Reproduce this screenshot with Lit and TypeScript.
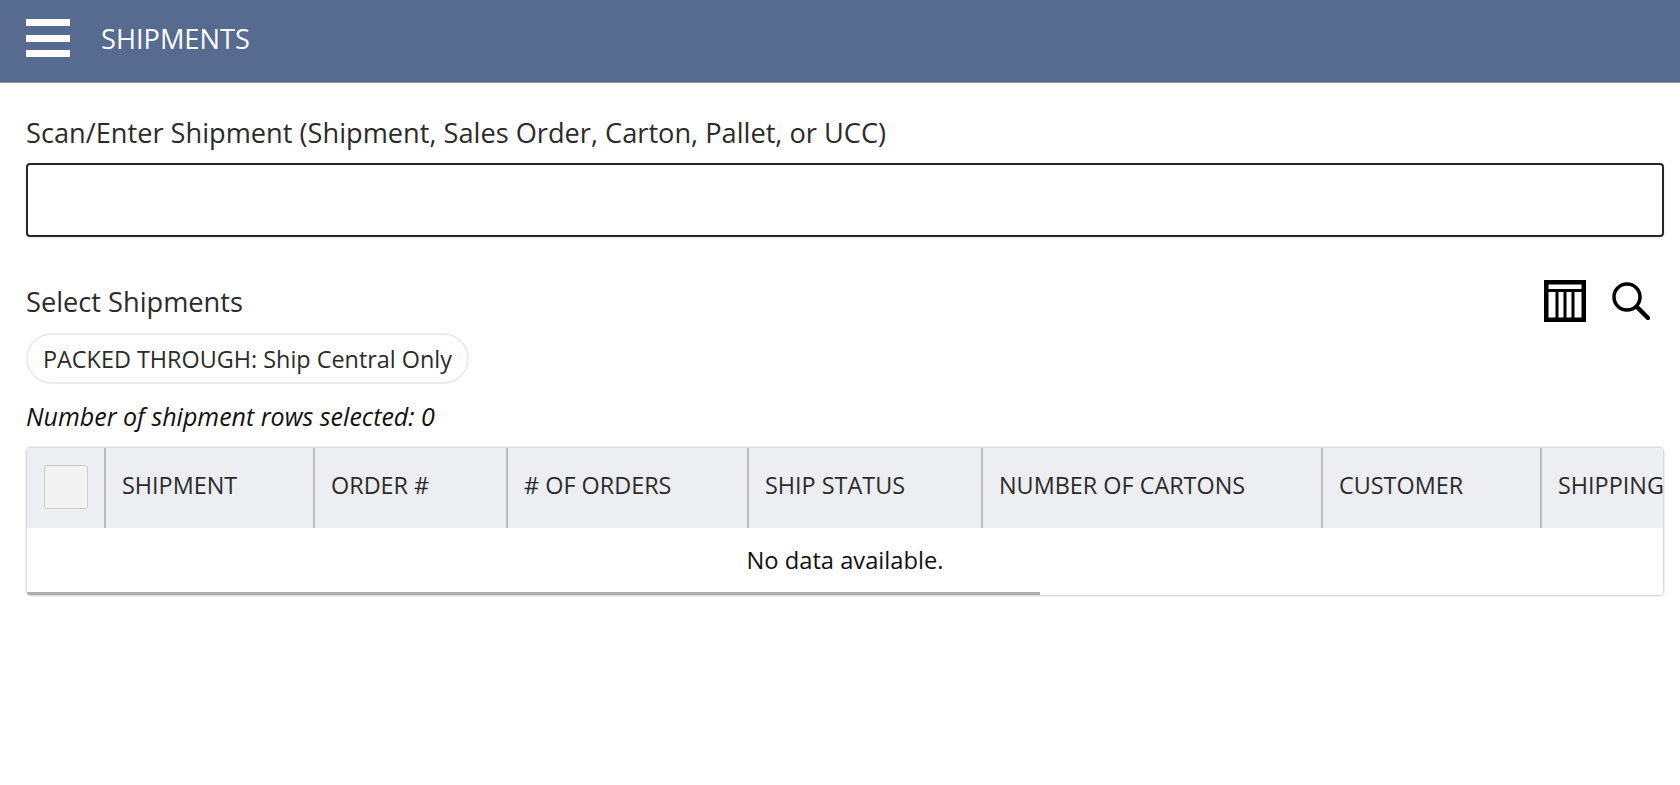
import { LitElement, html, css } from "lit";
import { customElement } from "lit/decorators.js";

const COLUMNS: [string, number][] = [
  ["SHIPMENT", 209],
  ["ORDER #", 193],
  ["# OF ORDERS", 241],
  ["SHIP STATUS", 234],
  ["NUMBER OF CARTONS", 340],
  ["CUSTOMER", 219],
  ["SHIPPING METHOD", 260],
];

@customElement("app-root")
export class AppRoot extends LitElement {
  static styles = css`
    :host { display: block; height: 785px; background: #fff; font-family: "Open Sans", sans-serif; color: #2b2b2b; overflow: hidden; }
    .header { box-sizing: border-box; height: 83px; background: #566b8f; border-bottom: 1px solid #8a97ad; display: flex; align-items: center; padding: 0 0 6px 26px; gap: 31px; }
    .burger { width: 44px; height: 38px; display: flex; flex-direction: column; justify-content: space-between; }
    .burger span { height: 7px; background: #fff; }
    .title { font-size: 27.2px; color: #fff; line-height: 36px; margin-top: 2px; }
    .content { padding: 0 16px 0 26px; }
    .label { font-size: 27.2px; line-height: 36px; margin-top: 32px; color: #2b2b2b; }
    .input { display: block; box-sizing: border-box; width: 100%; height: 74px; margin-top: 12px; border: 2px solid #262626; border-radius: 4px; background: #fff; box-shadow: 0 1px 3px rgba(0,0,0,.1); }
    .select-row { display: flex; align-items: center; justify-content: space-between; margin-top: 40px; height: 48px; }
    .select-label { font-size: 27.2px; line-height: 36px; margin-top: 2px; }
    .icons { display: flex; align-items: center; gap: 26px; margin-right: 14px; }
    .icons svg { display: block; }
    .chip { display: inline-block; box-sizing: border-box; height: 51px; line-height: 49px; margin-top: 8px; padding: 0 15px 0 15px; border: 2px solid #ececec; border-radius: 26px; font-size: 23.4px; white-space: nowrap; }
    .count { font-size: 25px; font-style: italic; line-height: 34px; margin-top: 15px; color: #111; }
    .table { box-sizing: border-box; margin: 15px 1px 0 1px; height: 147px; border-radius: 3px; overflow: hidden; box-shadow: 0 0 3px rgba(0,0,0,.4); position: relative; background: #fff; }
    .thead { display: flex; height: 80px; background: #edeef2; white-space: nowrap; }
    .cell-check { flex: none; width: 79px; display: flex; align-items: center; justify-content: center; box-sizing: border-box; border-right: 2px solid #bcbcbc; }
    .check { width: 44px; height: 44px; box-sizing: border-box; background: #f2f2f2; border: 1px solid #ccc; border-radius: 3px; margin-top: -3px; }
    .th { flex: none; box-sizing: border-box; padding: 0 0 7px 16px; display: flex; align-items: center; font-size: 23.4px; border-right: 2px solid #bcbcbc; }
    .empty { text-align: center; font-size: 23.7px; line-height: 34px; padding-top: 15px; color: #111; }
    .scroll { position: absolute; left: 0; bottom: 0; width: 1013px; height: 3px; background: #aeaeae; }
  `;

  render() {
    return html`
      <div class="header">
        <div class="burger"><span></span><span></span><span></span></div>
        <div class="title">SHIPMENTS</div>
      </div>
      <div class="content">
        <div class="label">Scan/Enter Shipment (Shipment, Sales Order, Carton, Pallet, or UCC)</div>
        <div class="input"></div>
        <div class="select-row">
          <div class="select-label">Select Shipments</div>
          <div class="icons">
            <svg width="42" height="42" viewBox="0 0 42 42">
              <rect x="2.25" y="2.25" width="37.5" height="37.5" fill="#fff" stroke="#000" stroke-width="4.5"/>
              <rect x="2" y="9" width="38" height="3" fill="#000"/>
              <path d="M13 12V38M21 12V38M29 12V38" stroke="#000" stroke-width="3" fill="none"/>
            </svg>
            <svg width="38" height="38" viewBox="0 0 38 38" fill="none" stroke="#000" stroke-linecap="round">
              <circle cx="15" cy="15" r="13" stroke-width="3.5"/>
              <path d="M25 25L36 36" stroke-width="4.5"/>
            </svg>
          </div>
        </div>
        <div class="chip">PACKED THROUGH: Ship Central Only</div>
        <div class="count">Number of shipment rows selected: 0</div>
        <div class="table">
          <div class="thead">
            <div class="cell-check"><div class="check"></div></div>
            ${COLUMNS.map(([name, w]) => html`<div class="th" style="width:${w}px">${name}</div>`)}
          </div>
          <div class="empty">No data available.</div>
          <div class="scroll"></div>
        </div>
      </div>
    `;
  }
}
